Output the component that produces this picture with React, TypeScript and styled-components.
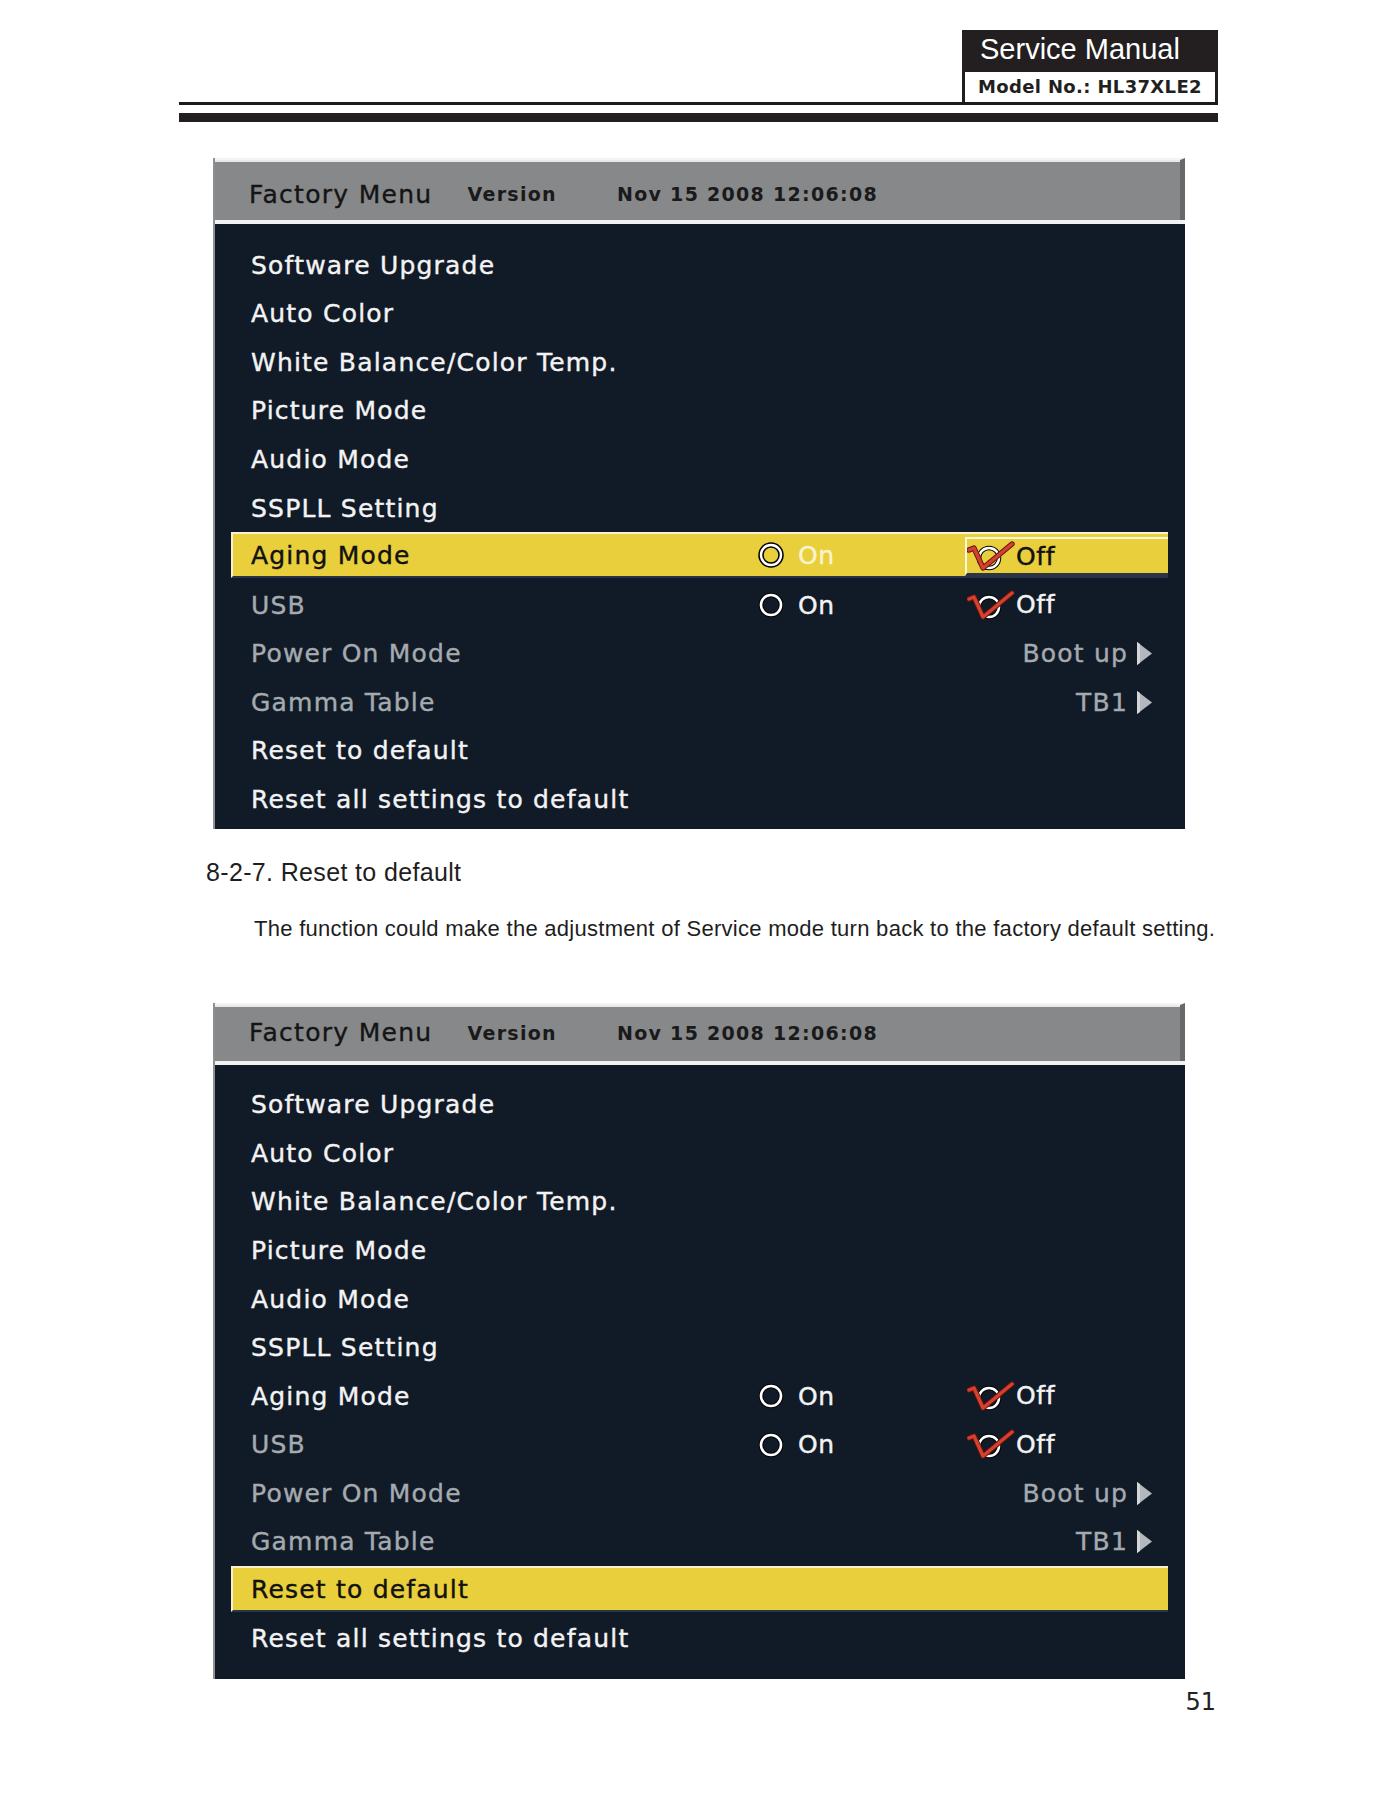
import styled, { createGlobalStyle } from "styled-components";

type RowKind = "plain" | "toggle" | "value";

interface MenuItem {
    label: string;
    kind: RowKind;
    dim?: boolean;
    value?: string;
}

const ITEMS: MenuItem[] = [
    { label: "Software Upgrade", kind: "plain" },
    { label: "Auto Color", kind: "plain" },
    { label: "White Balance/Color Temp.", kind: "plain" },
    { label: "Picture Mode", kind: "plain" },
    { label: "Audio Mode", kind: "plain" },
    { label: "SSPLL Setting", kind: "plain" },
    { label: "Aging Mode", kind: "toggle" },
    { label: "USB", kind: "toggle", dim: true },
    { label: "Power On Mode", kind: "value", dim: true, value: "Boot up" },
    { label: "Gamma Table", kind: "value", dim: true, value: "TB1" },
    { label: "Reset to default", kind: "plain" },
    { label: "Reset all settings to default", kind: "plain" },
];

const GlobalStyle = createGlobalStyle`
    body {
        margin: 0;
        background: #fff;
    }
`;

// 라디오 버튼 (On)
const RadioIcon = ({ strong }: { strong?: boolean }) => (
    <svg width="28" height="28" viewBox="0 0 28 28">
        <circle cx="14" cy="14" r="10" fill="none" stroke="#000" strokeWidth={strong ? 5.5 : 4.5} />
        <circle cx="14" cy="14" r="10" fill="none" stroke="#fff" strokeWidth={strong ? 2.4 : 2.6} />
    </svg>
);

// 체크 표시 (Off)
const CheckIcon = () => (
    <svg width="48" height="32" viewBox="0 0 48 32">
        <circle cx="22" cy="18" r="10" fill="none" stroke="#000" strokeWidth="4.5" />
        <circle cx="22" cy="18" r="10" fill="none" stroke="#fff" strokeWidth="2.5" />
        <polyline
            points="2,10 7,8 16,28 45,4"
            fill="none"
            stroke="#5e160e"
            strokeWidth="5.4"
            strokeLinejoin="round"
            strokeLinecap="round"
        />
        <polyline
            points="2,10 7,8 16,28 45,4"
            fill="none"
            stroke="#d6402e"
            strokeWidth="3.4"
            strokeLinejoin="round"
            strokeLinecap="round"
        />
    </svg>
);

const Arrow = () => (
    <svg width="15" height="23" viewBox="0 0 15 23">
        <polygon points="0,0 15,11.5 0,23" fill="#b4b8bc" />
        <polygon points="0,0 3,2 3,21 0,23" fill="#d3d6d9" />
    </svg>
);

interface MenuProps {
    activeIndex: number;
    titleHeight: number;
    titleTop: number;
    padTop: number;
    padBottom: number;
    boxedOff?: boolean;
}

const FactoryMenu = ({ activeIndex, titleHeight, titleTop, padTop, padBottom, boxedOff }: MenuProps) => (
    <Menu>
        <TitleBar $h={titleHeight} $pt={titleTop}>
            <TitleName>Factory Menu</TitleName>
            <TitleInfo $gap={35}>Version</TitleInfo>
            <TitleInfo $gap={60}>Nov 15 2008 12:06:08</TitleInfo>
        </TitleBar>
        <TitleStripe />
        <MenuBody $pt={padTop} $pb={padBottom}>
            {ITEMS.map((item, idx) => {
                const active = idx === activeIndex;
                return (
                    <Row key={item.label} $active={active}>
                        <Label $dim={!!item.dim} $active={active}>
                            {item.label}
                        </Label>
                        {item.kind === "toggle" && (
                            <>
                                <OptionCell>
                                    <RadioIcon strong={active} />
                                    <OptionText $tone={active ? "pale" : "white"}>On</OptionText>
                                </OptionCell>
                                <OffCell $boxed={active && !!boxedOff}>
                                    <CheckIcon />
                                    <OptionText $tone={active ? "black" : "white"}>Off</OptionText>
                                </OffCell>
                            </>
                        )}
                        {item.kind === "value" && (
                            <ValueCell>
                                <Label $dim $active={false}>
                                    {item.value}
                                </Label>
                                <Arrow />
                            </ValueCell>
                        )}
                    </Row>
                );
            })}
        </MenuBody>
    </Menu>
);

const App = () => (
    <>
        <GlobalStyle />
        <Page>
            <Header>
                <Badge>
                    <BadgeTitle>Service Manual</BadgeTitle>
                    <ModelBox>Model No.: HL37XLE2</ModelBox>
                </Badge>
            </Header>
            <ThickRule />

            <MenuWrap $mt={36}>
                <FactoryMenu activeIndex={6} titleHeight={62} titleTop={8} padTop={17} padBottom={5} boxedOff />
            </MenuWrap>

            <SectionTitle>8-2-7. Reset to default</SectionTitle>
            <Paragraph>
                The function could make the adjustment of Service mode turn back to the factory default setting.
            </Paragraph>

            <MenuWrap $mt={61}>
                <FactoryMenu activeIndex={10} titleHeight={58} titleTop={0} padTop={16} padBottom={16} />
            </MenuWrap>

            <PageNumber>51</PageNumber>
        </Page>
    </>
);

const Page = styled.div`
    width: 1039px;
    margin-left: 179px;
    padding-bottom: 80px;
`;
const Header = styled.header`
    display: flex;
    justify-content: flex-end;
    padding-top: 30px;
    border-bottom: 3px solid #1c1a1b;
`;
const Badge = styled.div`
    width: 256px;
    background: #231f20;
    padding: 0 3px;
    box-sizing: border-box;
`;
const BadgeTitle = styled.div`
    height: 42px;
    line-height: 38px;
    padding-left: 15px;
    color: #fff;
    font-family: "Liberation Sans", Arial, sans-serif;
    font-size: 29px;
`;
const ModelBox = styled.div`
    height: 30px;
    line-height: 30px;
    background: #fff;
    padding-left: 13px;
    color: #231f20;
    font-family: "DejaVu Sans", sans-serif;
    font-weight: bold;
    font-size: 18px;
    letter-spacing: 0.35px;
`;
const ThickRule = styled.div`
    height: 9px;
    margin-top: 8px;
    background: #231f20;
`;
const MenuWrap = styled.div<{ $mt: number }>`
    margin-top: ${(props) => props.$mt}px;
    margin-left: 34px;
`;
const Menu = styled.section`
    width: 972px;
    background: #111a27;
    border-left: 2px solid #8e9093;
    box-sizing: border-box;
`;
const TitleBar = styled.div<{ $h: number; $pt: number }>`
    height: ${(props) => props.$h}px;
    box-sizing: border-box;
    padding-top: ${(props) => props.$pt}px;
    padding-left: 34px;
    display: flex;
    align-items: center;
    background: #87888a;
    border-top: 2px solid #f4f4f4;
    border-right: 5px solid #67686a;
    box-shadow: inset 0 2px 0 #e9e9e9;
`;
const TitleName = styled.span`
    font-family: "DejaVu Sans", sans-serif;
    font-size: 25px;
    letter-spacing: 1.3px;
    color: #141414;
    -webkit-text-stroke: 0.35px #141414;
`;
const TitleInfo = styled.span<{ $gap: number }>`
    margin-left: ${(props) => props.$gap}px;
    font-family: "DejaVu Sans", sans-serif;
    font-weight: bold;
    font-size: 19px;
    letter-spacing: 1.3px;
    color: #1a1a1a;
`;
const TitleStripe = styled.div`
    height: 4px;
    background: #f2f2f2;
`;
const MenuBody = styled.div<{ $pt: number; $pb: number }>`
    padding: ${(props) => props.$pt}px 17px ${(props) => props.$pb}px 16px;
`;
const Row = styled.div<{ $active: boolean }>`
    display: grid;
    grid-template-columns: 1fr 208px 203px;
    align-items: center;
    box-sizing: border-box;
    height: ${(props) => (props.$active ? "46px" : "48.55px")};
    margin-bottom: ${(props) => (props.$active ? "2.55px" : "0")};
    padding-left: 18px;
    border-left: 2px solid ${(props) => (props.$active ? "#f7f1d2" : "transparent")};
    border-top: 2px solid ${(props) => (props.$active ? "#f7f1d2" : "transparent")};
    border-bottom: 2px solid ${(props) => (props.$active ? "#2a3449" : "transparent")};
    background: ${(props) => (props.$active ? "#e9cf3b" : "transparent")};
`;
const Label = styled.span<{ $dim: boolean; $active: boolean }>`
    font-family: "DejaVu Sans", sans-serif;
    font-size: 25px;
    letter-spacing: 1.2px;
    white-space: nowrap;
    color: ${(props) => (props.$active ? "#111" : props.$dim ? "#a5aaaf" : "#f3f3f3")};
    -webkit-text-stroke: 0.4px currentColor;
`;
const OptionCell = styled.div`
    display: flex;
    align-items: center;
    gap: 13px;
`;
const OffCell = styled.div<{ $boxed: boolean }>`
    display: flex;
    align-items: center;
    gap: 1px;
    align-self: stretch;
    box-sizing: border-box;
    border-left: 2px solid ${(props) => (props.$boxed ? "#fbf6dc" : "transparent")};
    border-top: 2px solid ${(props) => (props.$boxed ? "#fbf6dc" : "transparent")};
    border-bottom: 3px solid ${(props) => (props.$boxed ? "#2c3447" : "transparent")};
    margin: ${(props) => (props.$boxed ? "3px 0 0" : "0")};
`;
const OptionText = styled.span<{ $tone: "white" | "pale" | "black" }>`
    font-family: "DejaVu Sans", sans-serif;
    font-size: 25px;
    letter-spacing: 0.6px;
    color: ${(props) =>
        props.$tone === "black" ? "#111" : props.$tone === "pale" ? "#fbf3cf" : "#f3f3f3"};
    -webkit-text-stroke: 0.4px currentColor;
`;
const ValueCell = styled.div`
    grid-column: 2 / 4;
    justify-self: end;
    display: flex;
    align-items: center;
    gap: 9px;
    padding-right: 16px;
`;
const SectionTitle = styled.h3`
    margin: 28px 0 0 27px;
    font-family: "Liberation Sans", Arial, sans-serif;
    font-weight: normal;
    font-size: 25px;
    line-height: 30px;
    letter-spacing: 0.35px;
    color: #1e1e1e;
`;
const Paragraph = styled.p`
    margin: 29px 0 0 75px;
    font-family: "Liberation Sans", Arial, sans-serif;
    font-size: 22px;
    line-height: 26px;
    letter-spacing: 0.28px;
    white-space: nowrap;
    color: #1e1e1e;
`;
const PageNumber = styled.div`
    margin-top: 9px;
    text-align: right;
    padding-right: 2px;
    font-family: "DejaVu Sans", sans-serif;
    font-size: 24px;
    line-height: 28px;
    color: #222;
`;

export default App;
